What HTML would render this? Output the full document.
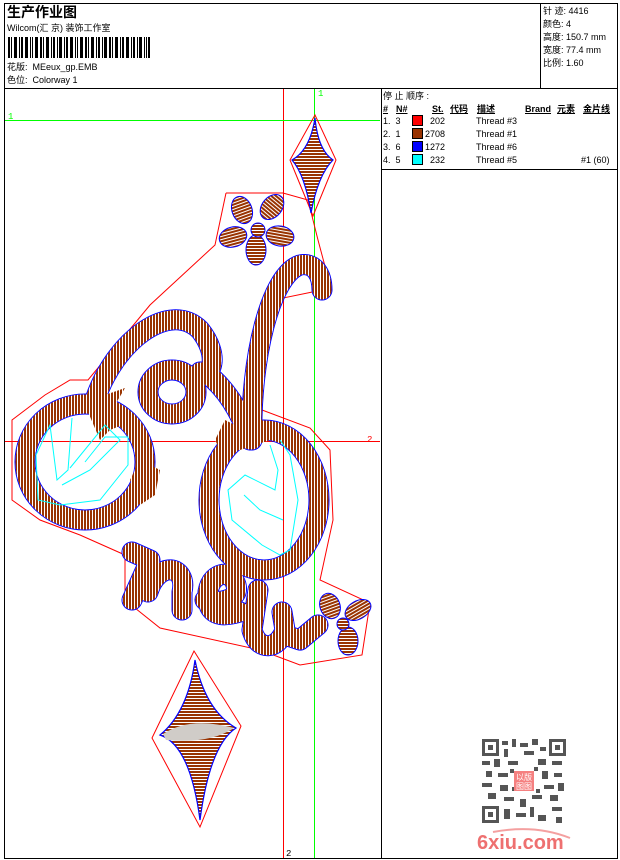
<!DOCTYPE html>
<html><head><meta charset="utf-8">
<style>
*{margin:0;padding:0}
body{width:620px;height:860px;background:#fff;position:relative;overflow:hidden;font-family:"Liberation Sans","Noto Sans CJK SC",sans-serif;font-size:9px;color:#000}
.t{position:absolute;white-space:nowrap;line-height:11px}
.b{position:absolute;background:#000}
.sw{position:absolute;width:9px;height:9px;border:1px solid #000}
.h{font-weight:bold;text-decoration:underline}
</style></head><body>
<div class="b" style="left:4px;top:3px;width:614px;height:1px"></div>
<div class="b" style="left:4px;top:858px;width:614px;height:1px"></div>
<div class="b" style="left:4px;top:3px;width:1px;height:856px"></div>
<div class="b" style="left:617px;top:3px;width:1px;height:856px"></div>
<div class="b" style="left:4px;top:88px;width:614px;height:1px"></div>
<div class="b" style="left:540px;top:3px;width:1px;height:85px"></div>
<div class="b" style="left:381px;top:88px;width:1px;height:771px"></div>
<div class="b" style="left:381px;top:169px;width:237px;height:1px"></div>

<div class="t" style="left:7px;top:4px;font-size:14px;font-weight:bold;line-height:16px">生产作业图</div>
<div class="t" style="left:7px;top:23px">Wilcom(汇 京) 装饰工作室</div>
<svg style="position:absolute;left:8px;top:37px" width="145" height="21">
<g fill="#000">
<rect x="0" y="0" width="2" height="21"/><rect x="3" y="0" width="1" height="21"/><rect x="6" y="0" width="3" height="21"/><rect x="11" y="0" width="1" height="21"/><rect x="13" y="0" width="2" height="21"/><rect x="17" y="0" width="3" height="21"/><rect x="22" y="0" width="1" height="21"/><rect x="24" y="0" width="1" height="21"/><rect x="27" y="0" width="3" height="21"/><rect x="32" y="0" width="2" height="21"/><rect x="35" y="0" width="1" height="21"/><rect x="38" y="0" width="3" height="21"/><rect x="43" y="0" width="1" height="21"/><rect x="45" y="0" width="2" height="21"/><rect x="49" y="0" width="1" height="21"/><rect x="51" y="0" width="3" height="21"/><rect x="56" y="0" width="1" height="21"/><rect x="58" y="0" width="2" height="21"/><rect x="62" y="0" width="3" height="21"/><rect x="67" y="0" width="1" height="21"/><rect x="69" y="0" width="1" height="21"/><rect x="72" y="0" width="3" height="21"/><rect x="77" y="0" width="2" height="21"/><rect x="80" y="0" width="1" height="21"/><rect x="83" y="0" width="3" height="21"/><rect x="88" y="0" width="1" height="21"/><rect x="90" y="0" width="2" height="21"/><rect x="94" y="0" width="1" height="21"/><rect x="96" y="0" width="3" height="21"/><rect x="101" y="0" width="2" height="21"/><rect x="104" y="0" width="1" height="21"/><rect x="107" y="0" width="3" height="21"/><rect x="112" y="0" width="1" height="21"/><rect x="114" y="0" width="2" height="21"/><rect x="118" y="0" width="3" height="21"/><rect x="123" y="0" width="1" height="21"/><rect x="125" y="0" width="2" height="21"/><rect x="129" y="0" width="1" height="21"/><rect x="131" y="0" width="3" height="21"/><rect x="136" y="0" width="1" height="21"/><rect x="138" y="0" width="1" height="21"/><rect x="140" y="0" width="2" height="21"/>
</g></svg>
<div class="t" style="left:7px;top:62px">花版:&nbsp; MEeux_gp.EMB</div>
<div class="t" style="left:7px;top:75px">色位:&nbsp; Colorway 1</div>

<div class="t" style="left:543px;top:6px">针 迹: 4416</div>
<div class="t" style="left:543px;top:19px">颜色: 4</div>
<div class="t" style="left:543px;top:32px">高度: 150.7 mm</div>
<div class="t" style="left:543px;top:45px">宽度: 77.4 mm</div>
<div class="t" style="left:543px;top:58px">比例: 1.60</div>

<div class="t" style="left:383px;top:91px">停 止 顺序 :</div>
<div class="t h" style="left:383px;top:104px">#</div>
<div class="t h" style="left:396px;top:104px">N#</div>
<div class="t h" style="left:432px;top:104px">St.</div>
<div class="t h" style="left:450px;top:104px">代码</div>
<div class="t h" style="left:477px;top:104px">描述</div>
<div class="t h" style="left:525px;top:104px">Brand</div>
<div class="t h" style="left:557px;top:104px">元素</div>
<div class="t h" style="left:583px;top:104px">金片线</div>

<div class="t" style="left:383px;top:116px">1.&nbsp; 3</div><div class="sw" style="left:412px;top:115px;background:#f00"></div><div class="t" style="left:425px;top:116px;width:20px;text-align:right">202</div><div class="t" style="left:476px;top:116px">Thread #3</div>
<div class="t" style="left:383px;top:129px">2.&nbsp; 1</div><div class="sw" style="left:412px;top:128px;background:#993300"></div><div class="t" style="left:420px;top:129px;width:25px;text-align:right">2708</div><div class="t" style="left:476px;top:129px">Thread #1</div>
<div class="t" style="left:383px;top:142px">3.&nbsp; 6</div><div class="sw" style="left:412px;top:141px;background:#00f"></div><div class="t" style="left:420px;top:142px;width:25px;text-align:right">1272</div><div class="t" style="left:476px;top:142px">Thread #6</div>
<div class="t" style="left:383px;top:155px">4.&nbsp; 5</div><div class="sw" style="left:412px;top:154px;background:#0ff"></div><div class="t" style="left:425px;top:155px;width:20px;text-align:right">232</div><div class="t" style="left:476px;top:155px">Thread #5</div><div class="t" style="left:581px;top:155px">#1 (60)</div>

<svg style="position:absolute;left:0;top:0" width="620" height="860">
<defs>
<pattern id="st" patternUnits="userSpaceOnUse" width="3" height="4">
<rect width="3" height="4" fill="#fff"/><rect width="2" height="4" fill="#993300"/>
</pattern>
<pattern id="sh" patternUnits="userSpaceOnUse" width="4" height="3">
<rect width="4" height="3" fill="#fff"/><rect width="4" height="2" fill="#993300"/>
</pattern>
</defs>
<line x1="283.5" y1="89" x2="283.5" y2="858" stroke="#f00"/>
<line x1="5" y1="441.5" x2="380" y2="441.5" stroke="#f00"/>
<line x1="314.5" y1="89" x2="314.5" y2="858" stroke="#0f0"/>
<line x1="5" y1="120.5" x2="380" y2="120.5" stroke="#0f0"/>
<text x="318" y="96" fill="#0f0" font-size="9" font-family="Liberation Mono,monospace">1</text>
<text x="8" y="119" fill="#0f0" font-size="9" font-family="Liberation Mono,monospace">1</text>
<text x="367" y="442" fill="#f00" font-size="9" font-family="Liberation Mono,monospace">2</text>
<text x="286" y="856" fill="#000" font-size="9" font-family="Liberation Mono,monospace">2</text>
<g fill="none" stroke="#f00" stroke-width="1">
<polyline points="226,193 283,193 308,200 318,240 330,285 322,290 283,298 270,330 260,400 262,410 310,428 330,450 333,520 320,580 370,603 362,655 300,665 260,650 160,628 125,600 125,555 80,535 40,520 12,500 12,420 45,395 70,380 88,380 150,305 215,245 226,193"/>
<polygon points="194,651 241,726 200,827 152,738"/>
<polygon points="315,115 336,160 313,216 290,160"/>
</g>
<g stroke="#00f" stroke-width="1.2">
<path d="M315,118 Q318,150 333,160 Q318,175 311,213 Q305,175 292,160 Q310,150 315,118Z" fill="url(#sh)"/>
<path d="M195,660 Q205,710 236,728 Q210,745 200,820 Q190,745 160,735 Q188,712 195,660Z" fill="url(#sh)"/>
</g>
<path d="M163,734 Q190,716 234,728 Q210,744 166,740Z" fill="#d0ccc8"/>
<g fill="none" stroke-linecap="round" stroke-linejoin="round">
<g stroke="#00f" stroke-width="21">
<ellipse cx="85" cy="462" rx="60" ry="58"/>
<ellipse cx="264" cy="500" rx="55" ry="70"/>
<path d="M95,400 C115,340 170,300 200,330 C220,355 212,378 200,372"/>
<ellipse cx="172" cy="392" rx="24" ry="22"/>
<path d="M205,372 Q235,395 250,440"/>
<path d="M252,440 C250,360 270,275 300,265 C315,262 322,275 322,290"/>
<path d="M132,552 L150,560 L132,600 M148,592 C158,560 188,565 182,592 L182,610"/>
<path d="M205,600 C220,604 240,600 236,585 C230,565 205,575 208,600 C210,620 230,615 240,612"/>
<path d="M258,590 L252,630 C258,652 278,650 285,630 L282,612 M285,635 L300,640 L318,625"/>
</g>
<g stroke="#fff" stroke-width="19">
<ellipse cx="85" cy="462" rx="60" ry="58"/>
<ellipse cx="264" cy="500" rx="55" ry="70"/>
<path d="M95,400 C115,340 170,300 200,330 C220,355 212,378 200,372"/>
<ellipse cx="172" cy="392" rx="24" ry="22"/>
<path d="M205,372 Q235,395 250,440"/>
<path d="M252,440 C250,360 270,275 300,265 C315,262 322,275 322,290"/>
<path d="M132,552 L150,560 L132,600 M148,592 C158,560 188,565 182,592 L182,610"/>
<path d="M205,600 C220,604 240,600 236,585 C230,565 205,575 208,600 C210,620 230,615 240,612"/>
<path d="M258,590 L252,630 C258,652 278,650 285,630 L282,612 M285,635 L300,640 L318,625"/>
</g>
<g stroke="url(#st)" stroke-width="19">
<ellipse cx="85" cy="462" rx="60" ry="58"/>
<ellipse cx="264" cy="500" rx="55" ry="70"/>
<path d="M95,400 C115,340 170,300 200,330 C220,355 212,378 200,372"/>
<ellipse cx="172" cy="392" rx="24" ry="22"/>
<path d="M205,372 Q235,395 250,440"/>
<path d="M252,440 C250,360 270,275 300,265 C315,262 322,275 322,290"/>
<path d="M132,552 L150,560 L132,600 M148,592 C158,560 188,565 182,592 L182,610"/>
<path d="M205,600 C220,604 240,600 236,585 C230,565 205,575 208,600 C210,620 230,615 240,612"/>
<path d="M258,590 L252,630 C258,652 278,650 285,630 L282,612 M285,635 L300,640 L318,625"/>
</g>
</g>
<g fill="url(#st)">
<polygon points="85,405 95,380 105,395 125,388 112,410 135,420 110,430 100,440"/>
<polygon points="215,440 225,420 245,430 260,415 270,440 240,450 220,450"/>
<polygon points="140,460 160,470 155,495 140,505 130,480"/>
</g>
<g fill="url(#sh)" stroke="#00f" stroke-width="1">
<ellipse cx="242" cy="210" rx="10" ry="14" transform="rotate(-20 242 210)"/>
<ellipse cx="272" cy="207" rx="10" ry="14" transform="rotate(40 272 207)"/>
<ellipse cx="280" cy="236" rx="14" ry="10" transform="rotate(10 280 236)"/>
<ellipse cx="256" cy="250" rx="10" ry="15"/>
<ellipse cx="233" cy="237" rx="14" ry="10" transform="rotate(-15 233 237)"/>
<circle cx="258" cy="230" r="7"/>
<ellipse cx="330" cy="606" rx="10" ry="13" transform="rotate(-20 330 606)"/>
<ellipse cx="358" cy="610" rx="14" ry="9" transform="rotate(-30 358 610)"/>
<ellipse cx="348" cy="641" rx="10" ry="14"/>
<circle cx="343" cy="624" r="6"/>
</g>
<g fill="none" stroke="#0ff" stroke-width="1">
<polyline points="72,418 68,470 57,480 50,425 36,455 38,500 60,505 100,500 128,465 128,437 105,437 85,462"/>
<polyline points="70,468 105,425 120,440 90,470 62,485"/>
<polyline points="280,440 290,455 298,500 290,550 280,555 262,545 232,520 228,490 245,475 275,490 278,470 270,445"/>
<polyline points="244,495 260,510 283,520"/>
</g>
</svg>

<svg style="position:absolute;left:482px;top:739px" width="84" height="84">
<rect width="84" height="84" fill="#fff"/>
<g fill="#555">
<rect x="0" y="0" width="17" height="17"/><rect x="67" y="0" width="17" height="17"/><rect x="0" y="67" width="17" height="17"/>
</g>
<g fill="#fff"><rect x="3" y="3" width="11" height="11"/><rect x="70" y="3" width="11" height="11"/><rect x="3" y="70" width="11" height="11"/></g>
<g fill="#555"><rect x="6" y="6" width="5" height="5"/><rect x="73" y="6" width="5" height="5"/><rect x="6" y="73" width="5" height="5"/>
<rect x="20" y="2" width="6" height="4"/><rect x="30" y="0" width="4" height="8"/><rect x="38" y="4" width="8" height="4"/><rect x="50" y="0" width="6" height="6"/><rect x="58" y="8" width="6" height="4"/>
<rect x="22" y="10" width="4" height="8"/><rect x="42" y="12" width="10" height="4"/><rect x="0" y="22" width="8" height="4"/><rect x="12" y="20" width="6" height="8"/>
<rect x="26" y="22" width="10" height="4"/><rect x="56" y="20" width="8" height="6"/><rect x="70" y="22" width="10" height="4"/>
<rect x="4" y="32" width="6" height="6"/><rect x="16" y="34" width="10" height="4"/><rect x="60" y="32" width="6" height="8"/><rect x="72" y="34" width="8" height="4"/>
<rect x="0" y="44" width="10" height="4"/><rect x="18" y="46" width="8" height="6"/><rect x="62" y="46" width="10" height="4"/><rect x="76" y="44" width="6" height="8"/>
<rect x="6" y="54" width="8" height="6"/><rect x="22" y="58" width="10" height="4"/><rect x="38" y="60" width="6" height="8"/><rect x="50" y="56" width="10" height="4"/><rect x="68" y="56" width="8" height="6"/>
<rect x="22" y="70" width="6" height="10"/><rect x="34" y="74" width="10" height="4"/><rect x="48" y="68" width="4" height="10"/><rect x="56" y="76" width="8" height="6"/><rect x="70" y="68" width="10" height="4"/><rect x="74" y="78" width="6" height="6"/>
<rect x="28" y="30" width="4" height="4"/><rect x="52" y="28" width="4" height="4"/><rect x="30" y="48" width="4" height="4"/><rect x="54" y="50" width="4" height="4"/>
</g>
<rect x="32" y="32" width="20" height="20" fill="#f58080"/>
<text x="34" y="41" font-size="8" fill="#fff" font-family="Noto Sans CJK SC,sans-serif">以版</text>
<text x="34" y="50" font-size="8" fill="#fff" font-family="Noto Sans CJK SC,sans-serif">图图</text>
</svg>
<svg style="position:absolute;left:475px;top:826px" width="100" height="26">
<path d="M18,6 Q60,-2 95,12" stroke="#f4a0a0" stroke-width="2" fill="none"/>
<text x="2" y="23" font-size="20" font-weight="bold" fill="#ee7070" font-family="Liberation Sans,sans-serif">6xiu.com</text>
</svg>
</body></html>
